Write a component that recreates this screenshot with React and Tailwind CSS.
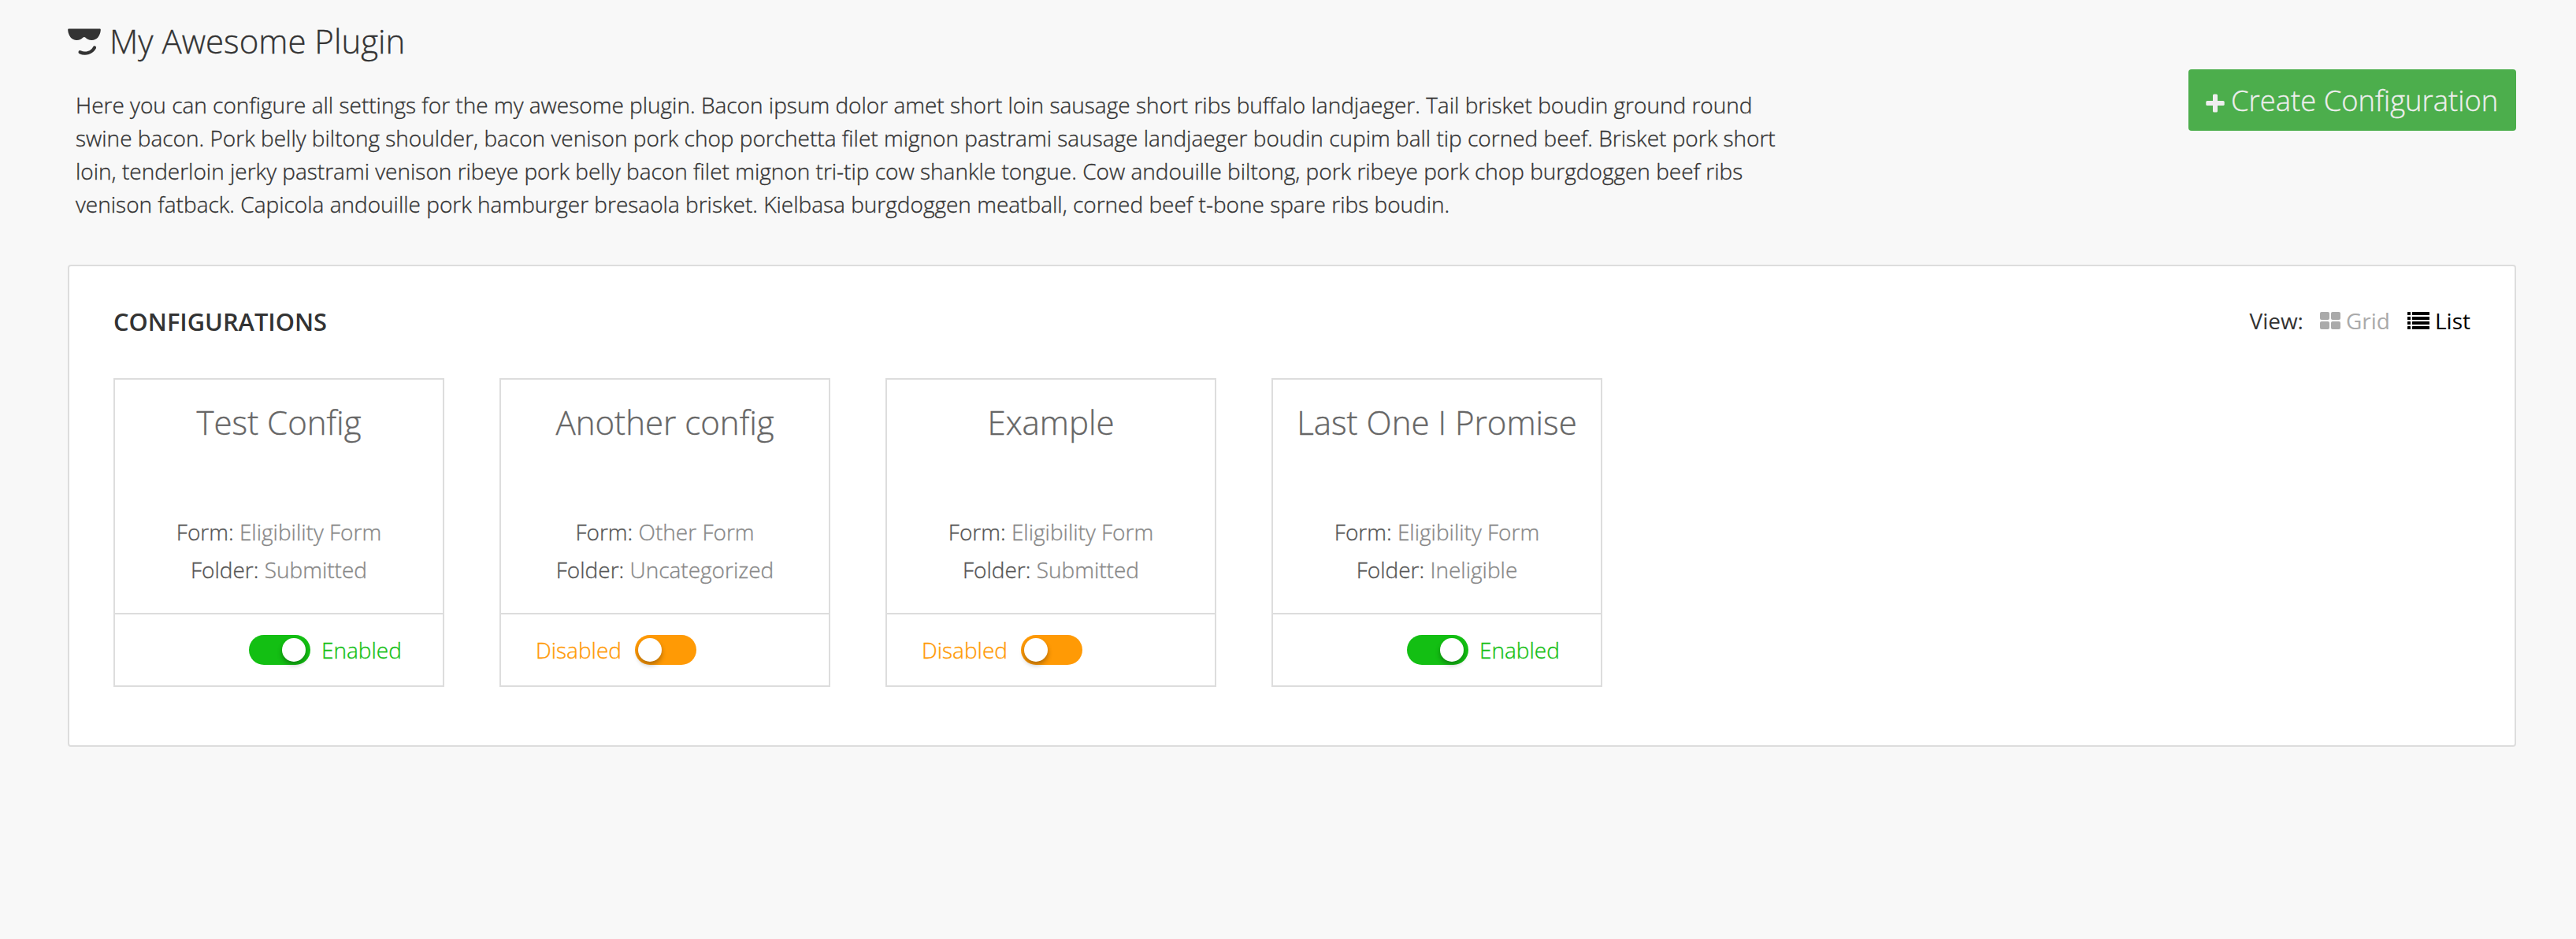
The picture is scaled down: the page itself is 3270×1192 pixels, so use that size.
const description =
  "Here you can configure all settings for the my awesome plugin. Bacon ipsum dolor amet short loin sausage short ribs buffalo landjaeger. Tail brisket boudin ground round swine bacon. Pork belly biltong shoulder, bacon venison pork chop porchetta filet mignon pastrami sausage landjaeger boudin cupim ball tip corned beef. Brisket pork short loin, tenderloin jerky pastrami venison ribeye pork belly bacon filet mignon tri-tip cow shankle tongue. Cow andouille biltong, pork ribeye pork chop burgdoggen beef ribs venison fatback. Capicola andouille pork hamburger bresaola brisket. Kielbasa burgdoggen meatball, corned beef t-bone spare ribs boudin.";

const configs = [
  { name: "Test Config", form: "Eligibility Form", folder: "Submitted", enabled: true },
  { name: "Another config", form: "Other Form", folder: "Uncategorized", enabled: false },
  { name: "Example", form: "Eligibility Form", folder: "Submitted", enabled: false },
  { name: "Last One I Promise", form: "Eligibility Form", folder: "Ineligible", enabled: true },
];

function ShadesIcon({ className }) {
  return (
    <svg className={className} viewBox="0 0 42 36" fill="none">
      <path
        d="M1 .4H41Q42 .4 41.8 2.2C41.2 9.6 36.8 15 30.6 15C26.6 15 24.2 13.6 22.6 11.8Q20.9 10.2 19.2 11.8C17.6 13.6 15.2 15 11.4 15C5.2 15 .8 9.6 .2 2.2Q0 .4 1 .4Z"
        fill="currentColor"
      />
      <path d="M15.6 30.2C22.6 33.2 30.4 31 34 24.4" stroke="currentColor" strokeWidth="4.2" strokeLinecap="round" />
    </svg>
  );
}

function PlusIcon({ className }) {
  return (
    <svg className={className} viewBox="0 0 24 24" fill="currentColor">
      <rect x="9" y="0.5" width="6" height="23" rx="1.6" />
      <rect x="0.3" y="9" width="23.4" height="6" rx="1.6" />
    </svg>
  );
}

function GridIcon({ className }) {
  return (
    <svg className={className} viewBox="0 0 26 22" fill="currentColor">
      <rect width="12" height="10" rx="2" />
      <rect x="14" width="12" height="10" rx="2" />
      <rect y="12" width="12" height="10" rx="2" />
      <rect x="14" y="12" width="12" height="10" rx="2" />
    </svg>
  );
}

function ListIcon({ className }) {
  return (
    <svg className={className} viewBox="0 0 28 22" fill="currentColor">
      {[0, 6, 12, 18].map((y) => (
        <g key={y}>
          <rect y={y} width="4" height="4" rx="0.5" />
          <rect x="6" y={y} width="22" height="4" rx="0.5" />
        </g>
      ))}
    </svg>
  );
}

function Toggle({ on }) {
  return (
    <span
      className={`flex h-[38px] w-[78px] shrink-0 items-center rounded-full px-1 ${
        on ? "justify-end bg-[#13bf13] pr-1.5" : "justify-start bg-[#ff9a05]"
      }`}
    >
      <span className="size-[30px] rounded-full bg-white shadow-[0_4px_6px_rgba(0,0,0,0.3)]" />
    </span>
  );
}

function ConfigCard({ config }) {
  return (
    <article className="flex h-[392px] w-[420px] flex-col border-2 border-[#ddd] text-[28px] font-light text-[#888] [-webkit-text-stroke:0.35px]">
      <div className="flex flex-1 flex-col justify-between pt-6 pb-[31px] text-center">
        <h3 className="text-[42px] leading-[60px] text-[#666]">{config.name}</h3>
        <div className="leading-[48px]">
          <p>
            <span className="text-[#555]">Form:</span> {config.form}
          </p>
          <p>
            <span className="text-[#555]">Folder:</span> {config.folder}
          </p>
        </div>
      </div>
      <footer className="grid h-[92px] grid-cols-[170px_78px_1fr] items-start border-t-2 border-[#ddd] pt-[26px] leading-[38px]">
        <span className="pr-[17px] text-right text-[#ff9a05]">{config.enabled ? "" : "Disabled"}</span>
        <Toggle on={config.enabled} />
        <span className="pl-[14px] text-[#13bf13]">{config.enabled ? "Enabled" : ""}</span>
      </footer>
    </article>
  );
}

export default function App() {
  return (
    <div className="min-h-[1192px] w-[3270px] bg-[#f8f8f8] pt-[22px] pr-[76px] pl-[86px] font-['Open_Sans',sans-serif] text-[#333]">
      <header className="flex h-[314px] items-start justify-between [-webkit-text-stroke:0.35px]">
        <div>
          <h1 className="flex text-[42px] leading-[60px] font-light">
            <ShadesIcon className="mt-3.5 mr-[11px] h-9 w-[42px]" />
            My Awesome Plugin
          </h1>
          <p className="mt-[30px] ml-2.5 w-[2180px] text-[28px] leading-[42px] font-light">{description}</p>
        </div>
        <button className="mt-[66px] flex h-[78px] w-[416px] items-center rounded-[4px] bg-[#4cae4c] pl-[22px] text-[36.4px] leading-[78px] font-light whitespace-nowrap text-[#eee]">
          <PlusIcon className="mt-2 mr-2 size-6 shrink-0" />
          Create Configuration
        </button>
      </header>

      <main className="h-[612px] rounded-[4px] border-2 border-[#ddd] bg-white px-14 pt-12">
        <div className="flex h-[94px] items-start justify-between">
          <h2 className="pt-px text-[30.8px] leading-[42px] font-semibold">CONFIGURATIONS</h2>
          <div className="flex text-[28px] leading-[42px]">
            <span className="mr-[21px]">View:</span>
            <span className="mr-[22px] flex text-[#aaa]">
              <GridIcon className="mt-2.5 mr-[7px] h-[22px] w-[26px]" />
              Grid
            </span>
            <span className="flex text-black">
              <ListIcon className="mt-2.5 mr-[7px] h-[22px] w-7" />
              List
            </span>
          </div>
        </div>
        <section className="flex gap-[70px]">
          {configs.map((config) => (
            <ConfigCard key={config.name} config={config} />
          ))}
        </section>
      </main>
    </div>
  );
}
